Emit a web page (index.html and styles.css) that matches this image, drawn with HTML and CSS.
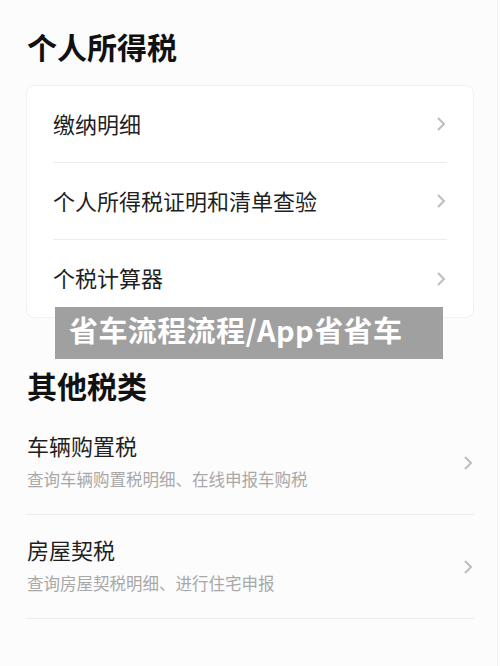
FILE: index.html
```html
<!DOCTYPE html>
<html lang="zh-CN">
<head>
<meta charset="utf-8">
<link rel="stylesheet" href="styles.css">
</head>
<body>
<div class="page">
  <h1 class="section-title first">个人所得税</h1>
  <div class="card">
    <div class="card-row">
      <span class="row-label">缴纳明细</span>
      <svg class="chev" width="10" height="16" viewBox="0 0 10 16"><polyline points="2,2 8,8 2,14" fill="none" stroke="#bdbdbd" stroke-width="2"/></svg>
    </div>
    <div class="card-row">
      <span class="row-label">个人所得税证明和清单查验</span>
      <svg class="chev" width="10" height="16" viewBox="0 0 10 16"><polyline points="2,2 8,8 2,14" fill="none" stroke="#bdbdbd" stroke-width="2"/></svg>
    </div>
    <div class="card-row">
      <span class="row-label">个税计算器</span>
      <svg class="chev" width="10" height="16" viewBox="0 0 10 16"><polyline points="2,2 8,8 2,14" fill="none" stroke="#bdbdbd" stroke-width="2"/></svg>
    </div>
  </div>

  <h2 class="section-title second">其他税类</h2>
  <div class="list">
    <div class="list-row">
      <div class="list-text">
        <div class="list-title">车辆购置税</div>
        <div class="list-sub">查询车辆购置税明细、在线申报车购税</div>
      </div>
      <svg class="chev" width="10" height="16" viewBox="0 0 10 16"><polyline points="2,2 8,8 2,14" fill="none" stroke="#bdbdbd" stroke-width="2"/></svg>
    </div>
    <div class="list-row">
      <div class="list-text">
        <div class="list-title">房屋契税</div>
        <div class="list-sub">查询房屋契税明细、进行住宅申报</div>
      </div>
      <svg class="chev" width="10" height="16" viewBox="0 0 10 16"><polyline points="2,2 8,8 2,14" fill="none" stroke="#bdbdbd" stroke-width="2"/></svg>
    </div>
  </div>

  <div class="watermark">省车流程流程/App省省车</div>
</div>
</body>
</html>
```
FILE: styles.css
```css
* { box-sizing: border-box; }
html, body {
  margin: 0;
  padding: 0;
  background: #fcfcfc;
}
body {
  font-family: "Noto Sans CJK SC", "Noto Sans", sans-serif;
  color: #1a1a1a;
}
.page {
  position: relative;
  width: 498px;
  height: 666px;
  padding: 0 24px 0 26px;
  border-right: 1px solid #f0f0f0;
  overflow: hidden;
}
.section-title {
  margin: 0;
  font-size: 30px;
  line-height: 40px;
  font-weight: bold;
  color: #111;
  padding-left: 1px;
}
.section-title.first {
  padding-top: 26px;
}
.section-title.first + .card {
  margin-top: 19px;
}
.section-title.second {
  margin-top: 47px;
}
.card {
  width: 448px;
  background: #fff;
  border: 1px solid #f1f1f1;
  border-radius: 8px;
  padding: 0 26px 0 26px;
}
.card-row {
  height: 77px;
  display: flex;
  align-items: center;
  justify-content: space-between;
  border-bottom: 1px solid #ececec;
}
.card-row:last-child {
  border-bottom: none;
}
.row-label {
  font-size: 22px;
  line-height: 30px;
  color: #1f1f1f;
  margin-bottom: 3px;
}
.card-row .chev {
  margin-right: 1px;
}
.chev {
  flex: none;
  display: block;
}
.list {
  margin-top: 6px;
  width: 448px;
}
.list-row {
  height: 104px;
  display: flex;
  align-items: center;
  justify-content: space-between;
  border-bottom: 1px solid #ececec;
  padding: 0 1px 0 1px;
}
.list-text {
  display: flex;
  flex-direction: column;
  margin-bottom: 4px;
}
.list-title {
  font-size: 22px;
  line-height: 30px;
  color: #1f1f1f;
}
.list-sub {
  margin-top: 7px;
  font-size: 16.5px;
  line-height: 24px;
  color: #a8a8a8;
}
.watermark {
  position: absolute;
  left: 55px;
  top: 307px;
  width: 388px;
  height: 52px;
  background: #a0a0a0;
  color: #fff;
  font-size: 29px;
  font-weight: bold;
  line-height: 44px;
  letter-spacing: 0.4px;
  padding-left: 14px;
  white-space: nowrap;
}
```
